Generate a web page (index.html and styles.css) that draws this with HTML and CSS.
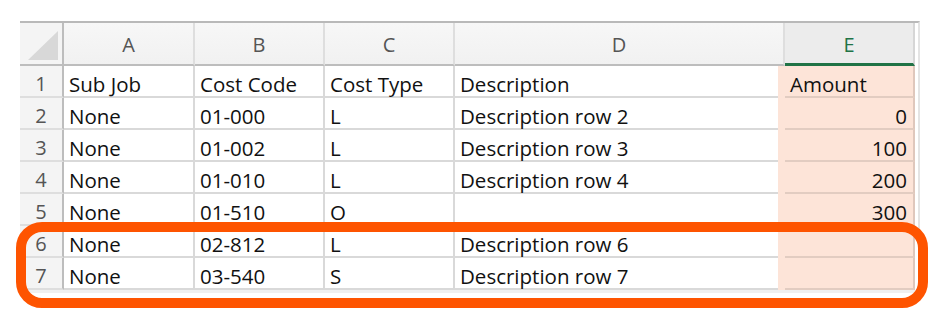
FILE: index.html
```html
<!DOCTYPE html>
<html lang="en">
<head>
  <meta charset="UTF-8">
  <meta name="viewport" content="width=device-width, initial-scale=1.0">
  <title>Cost Import Sheet</title>
  <link rel="stylesheet" href="styles.css">
</head>
<body>
  <div class="sheet">
    <div class="grid">
      <div class="corner"><span class="corner-mark"></span></div>
      <div class="col-head">A</div>
      <div class="col-head">B</div>
      <div class="col-head">C</div>
      <div class="col-head">D</div>
      <div class="col-head active">E</div>

      <div class="row-head">1</div>
      <div class="cell">Sub Job</div>
      <div class="cell">Cost Code</div>
      <div class="cell">Cost Type</div>
      <div class="cell">Description</div>
      <div class="cell amount">Amount</div>

      <div class="row-head">2</div>
      <div class="cell">None</div>
      <div class="cell">01-000</div>
      <div class="cell">L</div>
      <div class="cell">Description row 2</div>
      <div class="cell amount num">0</div>

      <div class="row-head">3</div>
      <div class="cell">None</div>
      <div class="cell">01-002</div>
      <div class="cell">L</div>
      <div class="cell">Description row 3</div>
      <div class="cell amount num">100</div>

      <div class="row-head">4</div>
      <div class="cell">None</div>
      <div class="cell">01-010</div>
      <div class="cell">L</div>
      <div class="cell">Description row 4</div>
      <div class="cell amount num">200</div>

      <div class="row-head">5</div>
      <div class="cell">None</div>
      <div class="cell">01-510</div>
      <div class="cell">O</div>
      <div class="cell"></div>
      <div class="cell amount num">300</div>

      <div class="row-head">6</div>
      <div class="cell">None</div>
      <div class="cell">02-812</div>
      <div class="cell">L</div>
      <div class="cell">Description row 6</div>
      <div class="cell amount"></div>

      <div class="row-head">7</div>
      <div class="cell">None</div>
      <div class="cell">03-540</div>
      <div class="cell">S</div>
      <div class="cell">Description row 7</div>
      <div class="cell amount"></div>
    </div>
    <div class="sheet-foot"></div>
  </div>

  <!-- rows 6 and 7 have no amount yet -->
  <div class="callout"></div>
</body>
</html>
```

FILE: styles.css
```css
body {
  margin: 0;
  background: #ffffff;
  font-family: "Open Sans", Lato, sans-serif;
  color: #111;
}

.sheet {
  margin: 21px 0 0 20px;
  width: 898px;
  border-top: 2px solid #b9b9b9;
  border-right: 2px solid #e4e4e4;
}

.grid {
  display: grid;
  grid-template-columns: 44px 131px 130px 130px 330px 130px;
  grid-auto-rows: 32px;
  grid-template-rows: 43px;
}

.corner {
  background: #f4f4f4;
  border-right: 2px solid #bdbdbd;
  border-bottom: 2px solid #bdbdbd;
  display: flex;
  align-items: flex-end;
  justify-content: flex-end;
  padding: 0 4px 4px 0;
}
.corner-mark {
  width: 30px;
  height: 29px;
  background: #d8d8d8;
  clip-path: polygon(100% 0, 100% 100%, 0 100%);
}

.col-head {
  background: linear-gradient(#f7f7f7, #f1f1f1);
  border-right: 2px solid #dedede;
  border-bottom: 2px solid #bdbdbd;
  display: flex;
  align-items: center;
  justify-content: center;
  font-size: 20px;
  color: #555;
  padding-top: 2px;
}
.col-head.active {
  background: #ececec;
  color: #217346;
  border-bottom: 3px solid #217346;
  border-right-color: #d6d6d6;
}

.row-head {
  background: #f4f4f4;
  border-right: 2px solid #bdbdbd;
  border-bottom: 2px solid #dedede;
  display: flex;
  align-items: flex-end;
  justify-content: center;
  font-size: 20px;
  line-height: 24px;
  color: #555;
}

.cell {
  border-right: 2px solid #d9d9d9;
  border-bottom: 2px solid #d9d9d9;
  display: flex;
  align-items: flex-end;
  padding: 0 6px 0 5px;
  font-size: 20.5px;
  line-height: 24px;
  white-space: nowrap;
  overflow: visible;
}

.amount {
  background: #fde4d8;
  border-right-color: #dfc7bc;
  border-bottom-color: #e2ccc1;
  box-shadow: -7px 0 0 #fde4d8;
}
.num {
  justify-content: flex-end;
}

.sheet-foot {
  height: 3px;
  background: #f0f0f0;
}

.callout {
  position: absolute;
  left: 16px;
  top: 222px;
  width: 912px;
  height: 86px;
  box-sizing: border-box;
  border: 10px solid #fe5400;
  border-radius: 26px;
}
```
